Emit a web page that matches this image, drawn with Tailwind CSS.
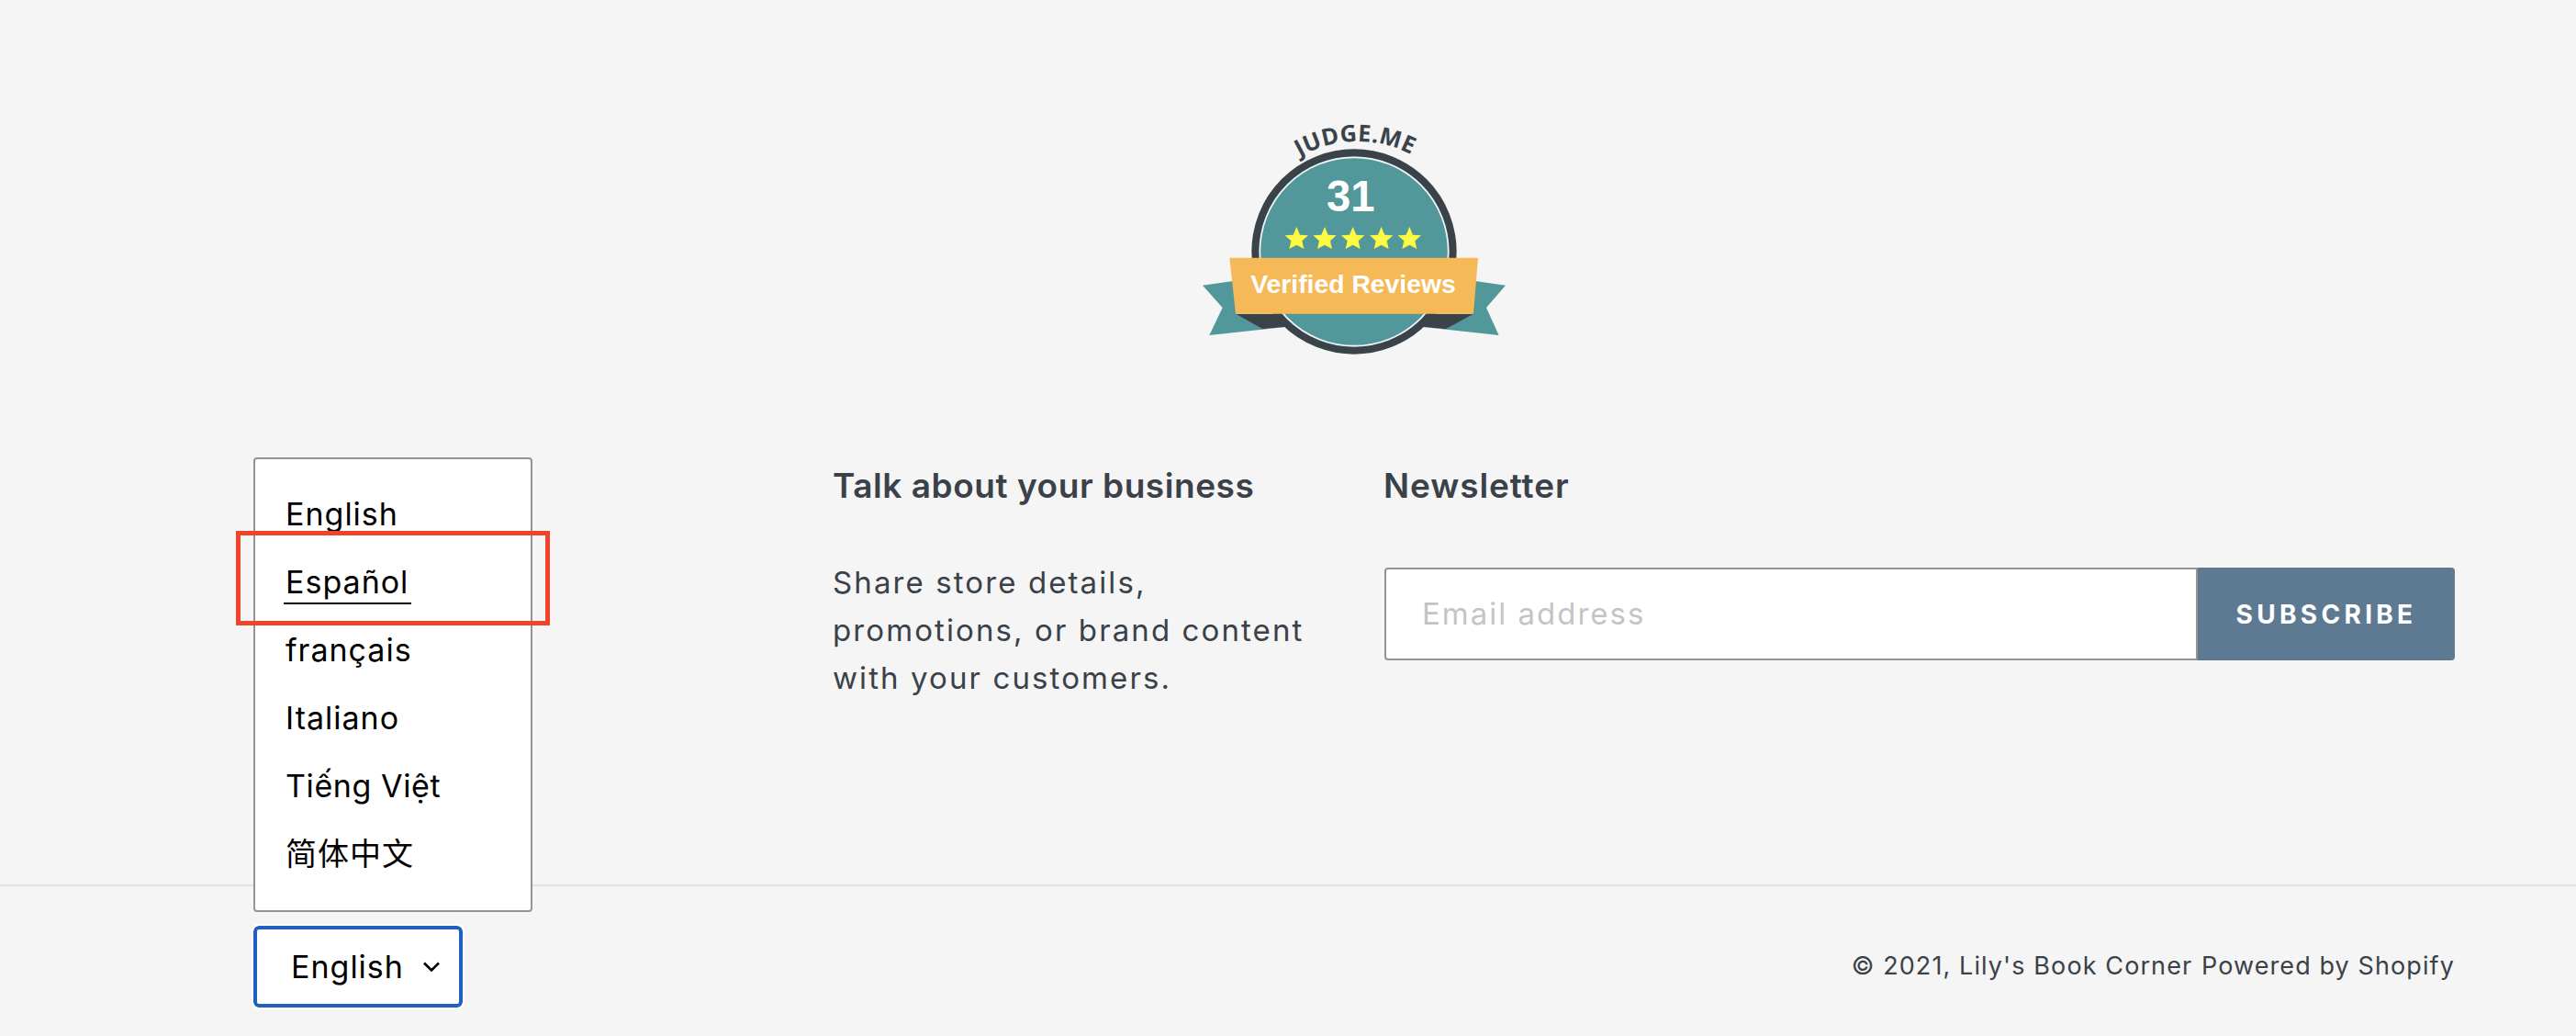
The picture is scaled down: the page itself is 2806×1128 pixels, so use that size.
<!DOCTYPE html>
<html><head><meta charset="utf-8"><script src="https://cdn.jsdelivr.net/npm/@tailwindcss/browser@4"></script></head>
<body class="bg-[#f5f5f5] font-['Inter','Noto_Sans_CJK_SC',sans-serif]">
<div class="relative h-[1128px] w-[2806px] overflow-hidden">
  <main class="h-[963px] px-[276px] pr-[132px]">
    <div class="flex justify-center pr-[10px] pt-[120px]">
      <svg width="380" height="280" viewBox="0 0 1140 840">
        <polygon points="90,572 190,558 200,665 285,715 360,708 112,735 155,645" fill="#52979a"/>
        <polygon points="1080,572 980,558 970,665 885,715 810,708 1058,735 1017,645" fill="#52979a"/>
        <circle cx="585" cy="462" r="323" fill="#52979a" stroke="#3a424a" stroke-width="24"/>
        <circle cx="585" cy="462" r="308" fill="none" stroke="#f5f5f5" stroke-width="5"/>
        <polygon points="198,665 285,715 360,708 330,665" fill="#3a424a"/>
        <polygon points="975,665 885,715 810,708 840,665" fill="#3a424a"/>
        <polygon points="178,482 990,482 975,665 198,665" fill="#f6b958"/>
        <path id="arc" d="M395,160 A 380 380 0 0 1 785,152" fill="none"/>
        <text font-family="'Open Sans',sans-serif" font-weight="700" font-size="76" letter-spacing="1" fill="#3a424a"><textPath href="#arc" startOffset="50%" text-anchor="middle">JUDGE.ME</textPath></text>
        <text x="574" y="330" text-anchor="middle" font-family="'Liberation Sans',sans-serif" font-weight="700" font-size="142" fill="#fff">31</text>
        <g fill="#fdfa44">
          <polygon transform="translate(397,420)" points="0,-39 11,-13 38,-11 18,7 24,33 0,20 -24,33 -18,7 -38,-11 -11,-13"/>
          <polygon transform="translate(489,420)" points="0,-39 11,-13 38,-11 18,7 24,33 0,20 -24,33 -18,7 -38,-11 -11,-13"/>
          <polygon transform="translate(581,420)" points="0,-39 11,-13 38,-11 18,7 24,33 0,20 -24,33 -18,7 -38,-11 -11,-13"/>
          <polygon transform="translate(674,420)" points="0,-39 11,-13 38,-11 18,7 24,33 0,20 -24,33 -18,7 -38,-11 -11,-13"/>
          <polygon transform="translate(766,420)" points="0,-39 11,-13 38,-11 18,7 24,33 0,20 -24,33 -18,7 -38,-11 -11,-13"/>
        </g>
        <text x="582" y="597" text-anchor="middle" font-family="'Liberation Sans',sans-serif" font-weight="700" font-size="85" fill="#fff">Verified Reviews</text>
      </svg>
    </div>
    <div class="mt-[103px] flex">
      <div class="w-[631px]"></div>
      <div class="w-[600px]">
        <h2 class="text-[37px] font-semibold leading-[52px] tracking-[0.55px] text-[#3a4149]">Talk about your business</h2>
        <p class="mt-[53px] w-[540px] text-[33px] leading-[52px] tracking-[2.1px] text-[#3a4149]">Share store details, promotions, or brand content with your customers.</p>
      </div>
      <div class="w-[1167px]">
        <h2 class="text-[37px] font-semibold leading-[52px] tracking-[0.9px] text-[#3a4149]">Newsletter</h2>
        <form class="mt-[63px] flex h-[101px] pl-[1px]">
          <div class="flex flex-1 items-center rounded-l-[4px] border-2 border-[#949494] bg-white pl-[39px] text-[33px] tracking-[2px] text-[#c4c4c4]">Email address</div>
          <button class="w-[280px] rounded-r-[4px] bg-[#5e7a93] text-[28px] font-bold tracking-[4.3px] text-white">SUBSCRIBE</button>
        </form>
      </div>
    </div>
  </main>
  <footer class="flex h-[165px] items-start justify-between border-t-2 border-[#e2e2e2] pl-[276px] pr-[132px]">
    <div class="mt-[43px] flex h-[89px] w-[228px] items-center rounded-[6px] border-4 border-[#2060c0] bg-white pl-[37px] text-[34px] tracking-[1px] text-black outline-2 outline-white">English
      <svg class="ml-[20px]" width="20" height="14" viewBox="0 0 20 14"><path d="M2 2.5 L10 10.5 L18 2.5" fill="none" stroke="#000" stroke-width="2.6"/></svg>
    </div>
    <p class="mt-[67px] text-[27px] leading-[40px] tracking-[1.1px] text-[#3a4149]">© 2021, Lily's Book Corner <span class="ml-[1px]">Powered by Shopify</span></p>
  </footer>
  <ul class="absolute left-[276px] top-[498px] h-[495px] w-[304px] rounded-[4px] border-2 border-[#949494] bg-white pl-[33px] pt-[23px] text-[34px] leading-[74px] tracking-[1px] text-black">
    <li>English</li>
    <li><span class="-ml-[2px] border-b-2 border-black pb-[2px] pl-[2px] pr-[3px]">Español</span></li>
    <li>français</li>
    <li>Italiano</li>
    <li class="tracking-[0.6px]">Tiếng Việt</li>
    <li>简体中文</li>
  </ul>
  <div class="absolute left-[257px] top-[578px] h-[103px] w-[342px] border-[5px] border-[#f0442a]"></div>
</div>
</body></html>
